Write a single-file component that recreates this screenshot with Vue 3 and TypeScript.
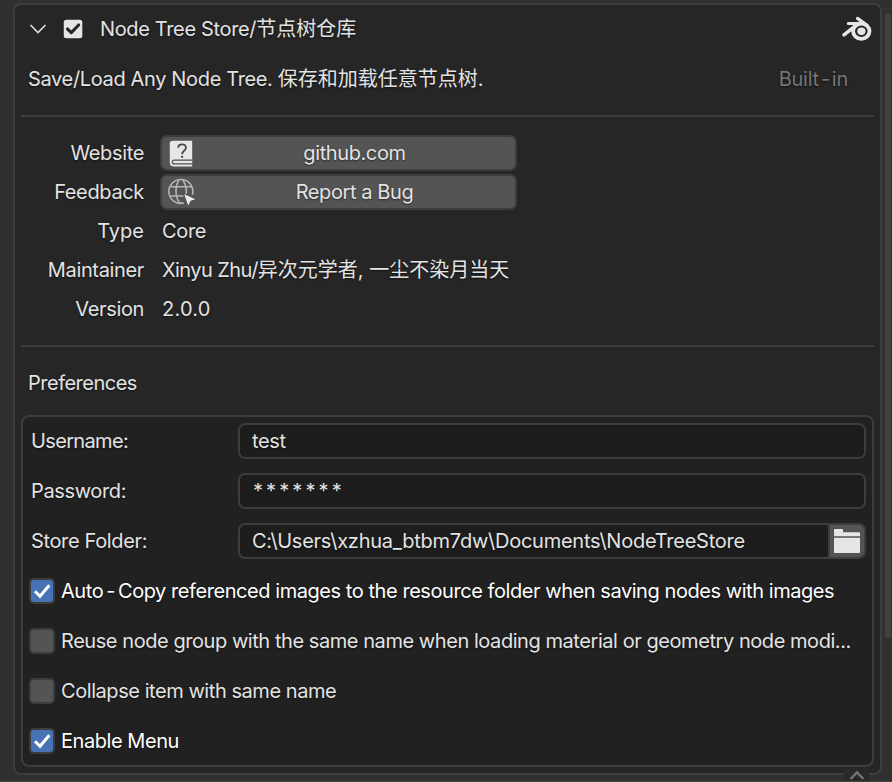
<script setup lang="ts">
import { ref } from 'vue'

interface Option {
  parts: string[]
  on: boolean
}

const username = ref('test')
const password = ref('*******')
const folder = ref('C:\\Users\\xzhua_btbm7dw\\Documents\\NodeTreeStore')

const options = ref<Option[]>([
  { parts: ['Auto', 'Copy referenced images to the resource folder when saving nodes with images'], on: true },
  { parts: ['Reuse node group with the same name when loading material or geometry node modi...'], on: false },
  { parts: ['Collapse item with same name'], on: false },
  { parts: ['Enable Menu'], on: true },
])
</script>

<template>
  <div class="window">
    <section class="panel">
      <header class="head">
        <svg class="chevron" viewBox="0 0 18 12"><path d="M1.5 2 L9 9.5 L16.5 2" /></svg>
        <svg class="enabled" viewBox="0 0 20 20">
          <rect x="0.8" y="0.8" width="18.5" height="18.5" rx="2.5" fill="#e6e6e6" />
          <path d="M4.5 10 L8.3 13.6 L15.7 6" fill="none" stroke="#262626" stroke-width="3.1" stroke-linecap="round" stroke-linejoin="round" />
        </svg>
        <span class="title">Node Tree Store/<span class="han">节点树仓库</span></span>
        <svg class="blender" viewBox="0 0 30 26">
          <g fill="none" stroke="#e6e6e6" stroke-linecap="round" stroke-linejoin="round">
            <ellipse cx="19.3" cy="15.2" rx="8.2" ry="7.6" stroke-width="3.8" />
            <path d="M15.5 2.4 L25 9.3" stroke-width="3.3" />
            <path d="M6.3 7.6 H17" stroke-width="3" />
            <path d="M2 18.8 L14 9.4" stroke-width="3.5" />
          </g>
          <path d="M13 6 H20 L17 9 L11 12Z" fill="#e6e6e6" />
          <ellipse cx="19.4" cy="15.2" rx="4.1" ry="3.7" fill="#e6e6e6" />
        </svg>
      </header>

      <div class="about">
        <span>Save/Load Any Node Tree. <span class="han">保存和加载任意节点树</span>.</span>
        <span class="origin">Built<i class="dash">-</i>in</span>
      </div>

      <hr class="rule" />

      <dl class="details">
        <dt>Website</dt>
        <dd>
          <button class="link">
            <svg class="link-icon" viewBox="0 0 28 28">
              <path d="M4.5 1.7 H24.2 V27.6 H6 Q1.8 27.6 1.8 23.5 V4.5 Q1.8 1.7 4.5 1.7Z" fill="#e6e6e6" />
              <path d="M24.2 21.2 H6.2 Q4.3 21.2 4.3 23 Q4.3 24.9 6.2 24.9 H24.2" fill="none" stroke="#505050" stroke-width="1.3" />
              <path d="M10.2 8.8 C10.2 4.2 18 4.2 18 8.8 C18 11.8 14.1 11.6 14.1 15.2" fill="none" stroke="#484848" stroke-width="1.8" />
              <rect x="13.1" y="16.8" width="2" height="2" fill="#484848" />
            </svg>
            <span>github.com</span>
          </button>
        </dd>
        <dt>Feedback</dt>
        <dd>
          <button class="link">
            <svg class="link-icon" viewBox="0 0 28 28">
              <g fill="none" stroke="#b4b4b4" stroke-width="1.6">
                <path d="M16 25.1 A12 12 0 1 1 24.4 16.8" />
                <path d="M14.8 25.5 Q9.5 25 8.3 17 Q7 8 11 2 M14.8 2 Q19 8 18.2 15.8" />
                <path d="M2.5 8.8 H23.6 M2.3 18 H15.5" />
              </g>
              <path d="M16.3 16.2 L27.3 21.3 L22.5 22.8 L20.2 27.5 Z" fill="#ececec" />
            </svg>
            <span>Report a Bug</span>
          </button>
        </dd>
        <dt class="type">Type</dt>
        <dd>Core</dd>
        <dt>Maintainer</dt>
        <dd class="maintainer">Xinyu Zhu/<span class="han">异次元学者, 一尘不染月当天</span></dd>
        <dt>Version</dt>
        <dd class="version">2.0.0</dd>
      </dl>

      <hr class="rule" />

      <h2 class="heading">Preferences</h2>

      <div class="prefs">
        <div class="row">
          <span class="label username">Username:</span>
          <div class="field"><span>{{ username }}</span></div>
        </div>
        <div class="row">
          <span class="label">Password:</span>
          <div class="field password"><span>{{ password }}</span></div>
        </div>
        <div class="row">
          <span class="label">Store Folder:</span>
          <div class="field path">
            <span>{{ folder }}</span>
            <button class="browse">
              <svg viewBox="0 0 26 24">
                <path d="M0 7.3 V1 Q0 0 1 0 H8 Q9 0 9 1 V3.3 H25 Q26 3.3 26 4.3 V7.3Z M0 8.8 H26 V23 Q26 24 25 24 H1 Q0 24 0 23Z" fill="#e6e6e6" />
              </svg>
            </button>
          </div>
        </div>
        <div v-for="option in options" :key="option.parts[0]" class="option" :class="{ on: option.on }" @click="option.on = !option.on">
          <span class="box">
            <svg v-if="option.on" viewBox="0 0 22 22"><path d="M4 11.3 L9 16.3 L18.3 5.3" /></svg>
          </span>
          <span class="caption"><template v-for="(part, i) in option.parts" :key="part"><i v-if="i > 0" class="dash">-</i>{{ part }}</template></span>
        </div>
      </div>
    </section>
    <div class="scrollbar"></div>
    <div class="region-toggle">
      <svg viewBox="0 0 16 10"><path d="M1.5 9 L8 2.5 L14.5 9" /></svg>
    </div>
  </div>
</template>

<style>
body {
  background: #303030;
}
</style>

<style scoped>
.window {
  position: relative;
  box-sizing: border-box;
  width: 892px;
  height: 782px;
  padding: 3px 0 0 13px;
  overflow: hidden;
  background: #303030;
  border-bottom: 1px solid #464646;
  color: #e3e3e3;
  font: 20px/30px Inter, "Noto Sans CJK SC", sans-serif;
  letter-spacing: -0.35px;
  text-shadow: 0 1px 2px rgba(0, 0, 0, 0.55);
  white-space: nowrap;
}
.han {
  letter-spacing: 0;
}
.panel {
  box-sizing: border-box;
  width: 869px;
  height: 772px;
  padding: 0 6px;
  border: 2px solid #3d3d3d;
  border-radius: 8px;
  background: #262626;
}
.head {
  display: flex;
  align-items: center;
  height: 48px;
  padding: 0 2px 0 8px;
}
.chevron {
  width: 18px;
  height: 12px;
  fill: none;
  stroke: #dcdcdc;
  stroke-width: 1.7;
}
.enabled {
  width: 20px;
  height: 20px;
  margin-left: 16px;
}
.title {
  margin-left: 17px;
}
.blender {
  width: 30px;
  height: 26px;
  margin-left: auto;
}
.about {
  display: flex;
  justify-content: space-between;
  align-items: center;
  height: 52px;
  padding: 0 26px 0 7px;
}
.origin {
  color: #757575;
  letter-spacing: -0.25px;
}
.dash {
  padding: 0 2px;
  font-style: normal;
}
.option .dash {
  padding: 0 3px;
}
.rule {
  height: 2px;
  margin: 10px 0 0;
  border: 0;
  background: #3d3d3d;
}
.details {
  display: grid;
  grid-template-columns: 123px 357px;
  grid-auto-rows: 36px;
  row-gap: 3px;
  column-gap: 16px;
  align-items: center;
  margin: 18px 0 0;
}
.details dt {
  text-align: right;
}
.details .type {
  letter-spacing: 0;
}
.details dd {
  margin: 0;
  padding-left: 2px;
}
.details dd:has(.link) {
  padding: 0;
}
.details .maintainer {
  letter-spacing: -0.57px;
}
.details .version {
  letter-spacing: 0.25px;
}
.link {
  display: flex;
  align-items: center;
  box-sizing: border-box;
  width: 357px;
  height: 36px;
  padding: 0 2px 0 6px;
  border: 2px solid #3d3d3d;
  border-radius: 7px;
  background: #545454;
  color: inherit;
  font: inherit;
  letter-spacing: -0.4px;
  text-shadow: inherit;
}
.link span {
  flex: 1;
  text-align: center;
}
.link-icon {
  width: 28px;
  height: 28px;
}
.details + .rule {
  margin-top: 18px;
}
.heading {
  margin: 0;
  padding: 21px 7px 17px;
  font-size: 20px;
  font-weight: 400;
  letter-spacing: -0.5px;
}
.prefs {
  box-sizing: border-box;
  display: flex;
  flex-direction: column;
  gap: 14px;
  width: 853px;
  height: 352px;
  padding: 6px;
  border: 2px solid #3d3d3d;
  border-radius: 8px;
  background: #212121;
}
.row {
  display: flex;
  align-items: center;
  height: 36px;
}
.label {
  width: 207px;
  padding-left: 2px;
  box-sizing: border-box;
}
.label.username {
  letter-spacing: -0.65px;
}
.row .label + .field {
  margin-left: 2px;
}
.field {
  box-sizing: border-box;
  display: flex;
  align-items: center;
  width: 628px;
  height: 36px;
  padding-left: 12px;
  border: 2px solid #3d3d3d;
  border-radius: 7px;
  background: #1d1d1d;
  overflow: hidden;
}
.path {
  letter-spacing: -0.25px;
}
.password {
  padding-left: 13px;
  letter-spacing: 3.1px;
}
.browse {
  display: flex;
  align-items: center;
  justify-content: center;
  box-sizing: border-box;
  width: 36px;
  height: 32px;
  margin-left: auto;
  padding: 0 1px 0 0;
  border: 0;
  border-left: 2px solid #3d3d3d;
  background: #545454;
}
.browse svg {
  width: 26px;
  height: 24px;
}
.option {
  display: flex;
  align-items: center;
  height: 36px;
  gap: 6px;
  letter-spacing: -0.44px;
}
.box {
  flex: none;
  box-sizing: border-box;
  width: 26px;
  height: 26px;
  border: 2px solid #3d3d3d;
  border-radius: 5px;
  background: #545454;
}
.box svg {
  display: block;
  width: 22px;
  height: 22px;
  fill: none;
  stroke: #fff;
  stroke-width: 3;
}
.on {
  color: #fff;
}
.on .box {
  background: #4772b3;
}
.scrollbar {
  position: absolute;
  top: 13px;
  left: 885px;
  width: 6px;
  height: 625px;
  border-radius: 3px;
  background: #404040;
}
.region-toggle {
  position: absolute;
  left: 844px;
  bottom: 0;
  display: flex;
  justify-content: center;
  width: 25px;
  height: 13px;
  border-radius: 4px 4px 0 0;
  background: #292929;
}
.region-toggle svg {
  width: 16px;
  height: 10px;
  margin-top: 2px;
  fill: none;
  stroke: #757575;
  stroke-width: 2.4;
}
</style>
